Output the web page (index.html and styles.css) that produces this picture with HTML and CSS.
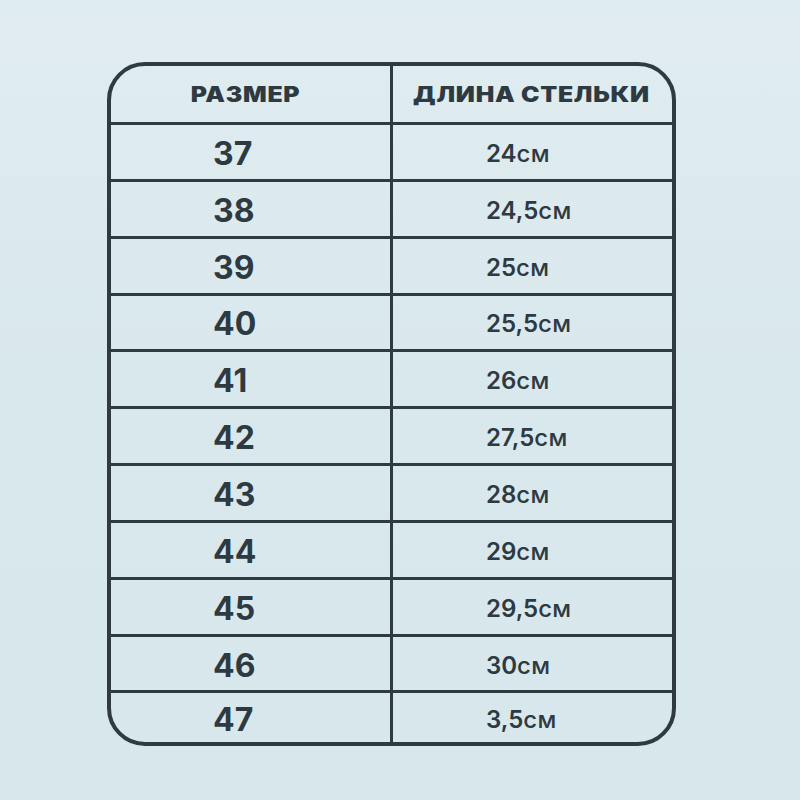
FILE: index.html
```html
<!DOCTYPE html>
<html lang="ru">
<head>
<meta charset="utf-8">
<title>Размерная сетка</title>
<link rel="stylesheet" href="styles.css">
</head>
<body>
<div class="table">
  <div class="row head">
    <div class="cell h1"><span class="ht">РАЗМЕР</span></div>
    <div class="cell h2"><span class="ht">ДЛИНА СТЕЛЬКИ</span></div>
  </div>
  <div class="row"><div class="cell size">37</div><div class="cell len">24<span class="unit">см</span></div></div>
  <div class="row"><div class="cell size">38</div><div class="cell len">24,5<span class="unit">см</span></div></div>
  <div class="row"><div class="cell size">39</div><div class="cell len">25<span class="unit">см</span></div></div>
  <div class="row"><div class="cell size">40</div><div class="cell len">25,5<span class="unit">см</span></div></div>
  <div class="row"><div class="cell size">41</div><div class="cell len">26<span class="unit">см</span></div></div>
  <div class="row"><div class="cell size">42</div><div class="cell len">27,5<span class="unit">см</span></div></div>
  <div class="row"><div class="cell size">43</div><div class="cell len">28<span class="unit">см</span></div></div>
  <div class="row"><div class="cell size">44</div><div class="cell len">29<span class="unit">см</span></div></div>
  <div class="row"><div class="cell size">45</div><div class="cell len">29,5<span class="unit">см</span></div></div>
  <div class="row"><div class="cell size">46</div><div class="cell len">30<span class="unit">см</span></div></div>
  <div class="row last"><div class="cell size">47</div><div class="cell len">3,5<span class="unit">см</span></div></div>
</div>
</body>
</html>
```

FILE: styles.css
```css
html, body {
  margin: 0;
  padding: 0;
}
body {
  width: 800px;
  height: 800px;
  background: linear-gradient(180deg, #e0ecf0 0%, #d9e8ed 50%, #d8e7ec 100%);
  font-family: Inter, "Noto Sans", sans-serif;
  color: #2e3a41;
  overflow: hidden;
}
.table {
  box-sizing: border-box;
  margin: 62px 0 0 107px;
  width: 569px;
  height: 684px;
  border: 4px solid #2f3a41;
  border-radius: 38px;
  overflow: hidden;
  display: flex;
  flex-direction: column;
}
.row {
  display: grid;
  grid-template-columns: 282px 279px;
  height: 56.85px;
  box-sizing: border-box;
  border-top: 3px solid #2f3a41;
}
.row.head {
  height: 56px;
  border-top: 0;
}
.row.last {
  height: 51.5px;
}
.cell {
  display: flex;
  align-items: center;
  box-sizing: border-box;
  padding-top: 3px;
}
.cell:first-child {
  border-right: 3px solid #2f3a41;
}
.h1, .h2 {
  justify-content: center;
  padding-top: 0;
  font-weight: 900;
  font-size: 21px;
}
.h1 {
  padding-right: 10px;
}
.h2 {
  padding-right: 3px;
}
.ht {
  display: inline-block;
  white-space: nowrap;
  letter-spacing: 0.6px;
  transform: scaleX(1.18);
}
.size {
  padding-left: 102px;
  font-size: 32px;
  font-weight: 700;
}
.len {
  padding-left: 93px;
  font-size: 24px;
  font-weight: 600;
}
.unit {
  font-weight: 500;
  letter-spacing: 0.3px;
}
```
